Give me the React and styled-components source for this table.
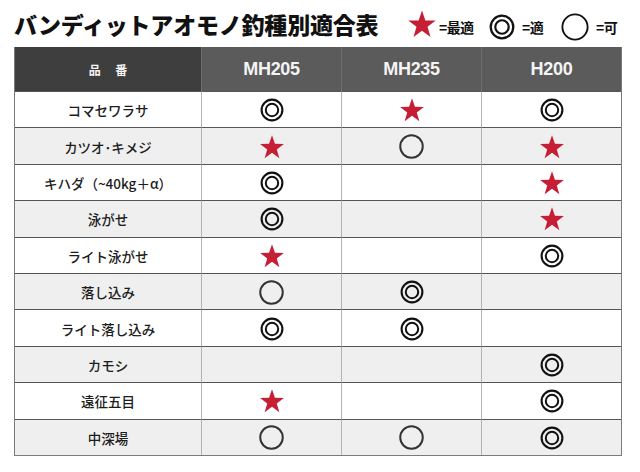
import styled, { createGlobalStyle } from 'styled-components';

const GlobalStyle = createGlobalStyle`
    html, body {
        margin: 0;
        padding: 0;
        background: #fff;
    }
    body {
        font-family: "Noto Sans CJK JP", "Noto Sans", sans-serif;
        color: #222;
    }
`

const Page = styled.div`
    width: 640px;
    height: 472px;
    padding: 0 0 0 14px;
    box-sizing: border-box;
`

const TitleBar = styled.div`
    width: 608px;
    height: 47px;
    display: flex;
    align-items: center;
    padding-top: 2px;
    box-sizing: border-box;
`

const Title = styled.h1`
    margin: 0;
    width: 364px;
    flex: none;
    font-size: 23px;
    font-weight: 900;
    color: #111;
    letter-spacing: -0.2px;
    line-height: 1;
    white-space: nowrap;
`

const Legend = styled.div`
    display: flex;
    align-items: center;
    margin-left: 29px;
    margin-top: 4px;
`

const LegendItem = styled.div`
    width: ${p => p.$w}px;
    flex: none;
    display: flex;
    align-items: center;
    gap: ${p => p.$gap || 3}px;
    svg {
        flex: none;
        margin-top: ${p => p.$lift || 0}px;
    }
`

const LegendText = styled.span`
    font-size: 14px;
    font-weight: 700;
    color: #111;
    letter-spacing: -0.6px;
    white-space: nowrap;
`

const Table = styled.div`
    width: 608px;
    box-sizing: border-box;
    border: 1px solid #7a7a7a;
    border-top: none;
    display: grid;
    grid-template-columns: 186px 140px 140px 140px;
`

const HeadCell = styled.div`
    height: 44px;
    display: flex;
    align-items: center;
    justify-content: center;
    background: ${p => (p.$first ? '#3e3e3e' : '#5b5b5b')};
    color: #f4f4f4;
    font-family: ${p => (p.$first ? '"Noto Sans CJK JP", sans-serif' : '"Liberation Sans", Arial, sans-serif')};
    font-size: ${p => (p.$first ? '12px' : '18px')};
    font-weight: 700;
    word-spacing: ${p => (p.$first ? '12px' : '0')};
    letter-spacing: ${p => (p.$first ? '0' : '-0.3px')};
    border-left: ${p => (p.$first ? 'none' : '1px solid #6e6e6e')};
`

const Cell = styled.div`
    height: 36.4px;
    box-sizing: border-box;
    display: flex;
    align-items: center;
    justify-content: center;
    background: ${p => (p.$alt ? '#efefef' : '#ffffff')};
    border-top: 1px solid #555;
    border-left: ${p => (p.$first ? 'none' : '1px solid #b4b4b4')};
    font-size: 13.5px;
    font-weight: 500;
    color: #1c1c1c;
    padding-top: 1px;
`

const Star = ({ size = 26 }) => (
    <svg width={size} height={size} viewBox="0 0 24 24">
        <path
            d="M12 1.2 L14.7 9.1 L23 9.2 L16.4 14.2 L18.8 22.3 L12 17.4 L5.2 22.3 L7.6 14.2 L1 9.2 L9.3 9.1 Z"
            fill="#c61f35"
        />
    </svg>
)

const DoubleCircle = ({ size = 24 }) => (
    <svg width={size} height={size} viewBox="0 0 24 24">
        <circle cx="12" cy="12" r="10.4" fill="none" stroke="#111" strokeWidth="2.1" />
        <circle cx="12" cy="12" r="6.2" fill="none" stroke="#111" strokeWidth="2" />
    </svg>
)

const Circle = ({ size = 25, color = '#333', width = 1.9 }) => (
    <svg width={size} height={size} viewBox="0 0 24 24">
        <circle cx="12" cy="12" r="10.8" fill="none" stroke={color} strokeWidth={width} />
    </svg>
)

const marks = {
    S: <Star />,
    D: <DoubleCircle />,
    C: <Circle />,
    '-': null,
}

const rows = [
    ['コマセワラサ', 'D', 'S', 'D'],
    ['カツオ･キメジ', 'S', 'C', 'S'],
    ['キハダ（~40kg＋α）', 'D', '-', 'S'],
    ['泳がせ', 'D', '-', 'S'],
    ['ライト泳がせ', 'S', '-', 'D'],
    ['落し込み', 'C', 'D', '-'],
    ['ライト落し込み', 'D', 'D', '-'],
    ['カモシ', '-', '-', 'D'],
    ['遠征五目', 'S', '-', 'D'],
    ['中深場', 'C', 'C', 'D'],
]

const models = ['MH205', 'MH235', 'H200']

const App = () => {
    return (
        <Page>
            <GlobalStyle />
            <TitleBar>
                <Title>バンディットアオモノ釣種別適合表</Title>
                <Legend>
                    <LegendItem $w={82} $gap={2} $lift={-6}>
                        <Star size={30} />
                        <LegendText>=最適</LegendText>
                    </LegendItem>
                    <LegendItem $w={72} $gap={7}>
                        <DoubleCircle size={26} />
                        <LegendText>=適</LegendText>
                    </LegendItem>
                    <LegendItem $w={60} $gap={7}>
                        <Circle size={28} color="#111" width={1.6} />
                        <LegendText>=可</LegendText>
                    </LegendItem>
                </Legend>
            </TitleBar>
            <Table>
                <HeadCell $first>品 番</HeadCell>
                {models.map(m => (
                    <HeadCell key={m}>{m}</HeadCell>
                ))}
                {rows.map((row, i) =>
                    row.map((v, j) => (
                        <Cell key={`${i}-${j}`} $first={j === 0} $alt={i % 2 === 1}>
                            {j === 0 ? v : marks[v]}
                        </Cell>
                    ))
                )}
            </Table>
        </Page>
    );
};

export default App;
